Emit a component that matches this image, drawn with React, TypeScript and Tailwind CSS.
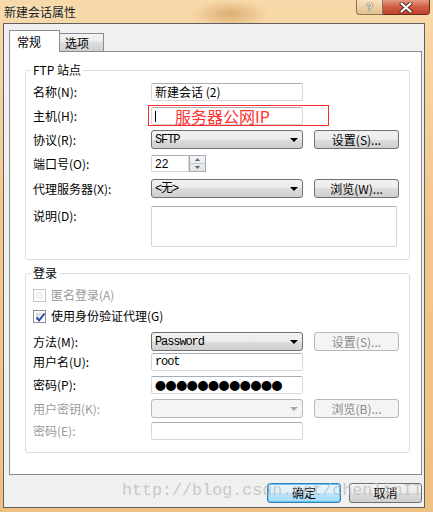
import React from "react";

const mono = "font-['Liberation_Mono','Noto_Sans_CJK_SC',monospace]";
const btnFace =
  "border-[#707070] bg-[linear-gradient(#f2f2f2,#ebebeb_50%,#dddddd_50%,#cfcfcf)] text-black";
const btnOff = "border-[#b5b9bc] bg-[#f4f4f4] text-[#8a8a8a]";

function Arrow({ off }: { off?: boolean }) {
  return (
    <svg width="8" height="4" viewBox="0 0 8 4" className="shrink-0">
      <path d="M0 0h8L4 4z" fill={off ? "#a9a9a9" : "#000"} />
    </svg>
  );
}

function Combo({ text, off }: { text?: string; off?: boolean }) {
  return (
    <div
      className={`w-[152px] h-[19px] rounded-[3px] border flex items-center pl-[3px] pr-[4px] ${
        off ? btnOff : btnFace
      }`}
    >
      <span className={`flex-1 leading-[14px] ${mono} text-[12px] tracking-[-1.1px]`}>{text}</span>
      <Arrow off={off} />
    </div>
  );
}

function Btn({ label, off }: { label: string; off?: boolean }) {
  return (
    <div
      className={`ml-[11px] w-[85px] h-[19px] rounded-[3px] border flex items-center justify-center leading-[14px] ${
        off ? btnOff : btnFace
      }`}
    >
      {label}
    </div>
  );
}

function Field({ cls, children }: { cls: string; children?: React.ReactNode }) {
  return (
    <div
      className={`bg-white rounded-[2px] border border-[#d4d7dc] border-t-[#abadb3] flex items-center pl-[3px] ${cls}`}
    >
      {children}
    </div>
  );
}

function Row({
  label,
  mt,
  off,
  top,
  children,
}: {
  label: string;
  mt: string;
  off?: boolean;
  top?: boolean;
  children: React.ReactNode;
}) {
  return (
    <div className={`relative flex ${top ? "items-start" : "items-center"} ${mt}`}>
      <span
        className={`w-[118px] shrink-0 leading-[14px] ${top ? "mt-[3px]" : ""} ${
          off ? "text-[#9b9b9b]" : "text-black"
        }`}
      >
        {label}
      </span>
      {children}
    </div>
  );
}

function Check({ checked, off }: { checked?: boolean; off?: boolean }) {
  return (
    <div
      className={`w-[13px] h-[13px] shrink-0 border bg-white p-[2px] ${
        off ? "border-[#c4c4c4]" : "border-[#8e8f8f]"
      }`}
    >
      <div
        className={`w-full h-full relative ${
          off ? "bg-[#f2f2f2]" : "bg-[linear-gradient(135deg,#d4d6d8,#f7f7f7)]"
        }`}
      >
        {checked && (
          <svg width="11" height="11" viewBox="0 0 11 11" className="absolute -left-[1px] -top-[1px]">
            <path d="M1.5 5.5l2.6 3L9.6 1.5" fill="none" stroke="#2b4ba3" strokeWidth="2" />
          </svg>
        )}
      </div>
    </div>
  );
}

function Group({ title, cls, children }: { title: string; cls: string; children: React.ReactNode }) {
  return (
    <div className={`relative w-[385px] border border-[#d5dfe5] rounded-[3px] pl-[7px] flex flex-col ${cls}`}>
      <span className="absolute left-[5px] -top-[8px] px-[2px] bg-white leading-[14px]">{title}</span>
      {children}
    </div>
  );
}

export default function App() {
  return (
    <div className="relative w-[433px] h-[512px] overflow-hidden flex flex-col text-[12px] font-['Noto_Sans_CJK_SC','Noto_Sans',sans-serif] bg-[radial-gradient(ellipse_38px_14px_at_230px_14px,#dcae73,transparent),linear-gradient(#f8d9a9,#f3c88e_40%,#eec083)]">
      {/* title bar */}
      <div className="h-[23px] shrink-0 flex items-start">
        <span className="ml-[4px] mt-[4px] leading-[15px] text-[#1b1b1b] [text-shadow:0_0_5px_#fff3dc]">
          新建会话属性
        </span>
        <div className="ml-auto mr-[3px] flex">
          <div className="w-[27px] h-[15px] border border-t-0 border-[#8b7558] rounded-bl-[4px] bg-[linear-gradient(#f7e2c3,#ecd0a6_50%,#e3c08f)] flex items-center justify-center">
            <span className="text-[11px] leading-[13px] font-bold text-[#f8efe0] font-['Liberation_Sans',sans-serif] [text-shadow:0_0_1px_#3a3a3a,0_0_1px_#3a3a3a]">
              ?
            </span>
          </div>
          <div className="w-[47px] h-[15px] border border-t-0 border-l-0 border-[#6d2a1c] rounded-br-[4px] bg-[linear-gradient(#e39a84,#d1624a_45%,#c0422a)] flex items-center justify-center">
            <svg width="14" height="11" viewBox="0 0 14 11">
              <path d="M2.5 1.5l9 8M11.5 1.5l-9 8" stroke="#5a2a22" strokeWidth="4" strokeLinecap="round" />
              <path d="M2.5 1.5l9 8M11.5 1.5l-9 8" stroke="#ffffff" strokeWidth="2.2" strokeLinecap="round" />
            </svg>
          </div>
        </div>
      </div>

      {/* client */}
      <div className="ml-[3px] w-[422px] h-[485px] border border-[#5f5f5f] bg-[#f0f0f0] flex flex-col">
        {/* tabs */}
        <div className="mt-[6px] ml-[5px] flex items-end">
          <div className="relative z-10 -mb-px w-[51px] h-[22px] border border-b-0 border-[#898c95] bg-white pl-[7px] pt-[4px] leading-[14px]">
            常规
          </div>
          <div className="w-[44px] h-[18px] border border-l-0 border-b-0 border-[#898c95] bg-[linear-gradient(#f3f3f3,#ebebeb_50%,#dddddd_50%,#cfcfcf)] pl-[5px] pt-[2px] leading-[14px]">
            选项
          </div>
        </div>

        {/* tab page */}
        <div className="ml-[5px] w-[413px] h-[424px] border border-[#898c95] bg-white pl-[15px] pt-[18px] flex flex-col">
          <Group title="FTP 站点" cls="h-[190px]">
            <Row label="名称(N):" mt="mt-[12px]">
              <Field cls="w-[152px] h-[18px]">
                <span className="leading-[14px]">新建会话 (2)</span>
              </Field>
            </Row>
            <Row label="主机(H):" mt="mt-[6px]">
              <Field cls="w-[152px] h-[18px] border-[#84b8e8] border-t-[#5d9ad0]">
                <span className="w-px h-[11px] bg-black" />
              </Field>
              <div className="absolute left-[115px] -top-[2px] w-[181px] h-[21px] border border-[#ff2a2a] pl-[26px] flex items-center">
                <span className="text-[16px] leading-[18px] text-[#ff3030]">服务器公网IP</span>
              </div>
            </Row>
            <Row label="协议(R):" mt="mt-[5px]">
              <Combo text="SFTP" />
              <Btn label="设置(S)..." />
            </Row>
            <Row label="端口号(O):" mt="mt-[6px]">
              <Field cls="w-[38px] h-[17px] rounded-r-none">
                <span className="leading-[14px] font-['Liberation_Sans',sans-serif]">22</span>
              </Field>
              <div className="w-[17px] h-[17px] border border-[#a5a9b0] flex flex-col bg-[linear-gradient(#f4f4f4,#e2e2e2)]">
                <div className="flex-1 flex items-center justify-center border-b border-[#c7cbd1]">
                  <svg width="5" height="3" viewBox="0 0 5 3">
                    <path d="M0 3h5L2.5 0z" fill="#4f6790" />
                  </svg>
                </div>
                <div className="flex-1 flex items-center justify-center">
                  <svg width="5" height="3" viewBox="0 0 5 3">
                    <path d="M0 0h5L2.5 3z" fill="#4f6790" />
                  </svg>
                </div>
              </div>
            </Row>
            <Row label="代理服务器(X):" mt="mt-[7px]">
              <Combo text="<无>" />
              <Btn label="浏览(W)..." />
            </Row>
            <Row label="说明(D):" mt="mt-[8px]" top>
              <Field cls="w-[246px] h-[41px]" />
            </Row>
          </Group>

          <Group title="登录" cls="mt-[13px] h-[180px]">
            <div className="mt-[14px] flex items-center">
              <Check off />
              <span className="ml-[5px] leading-[14px] text-[#9b9b9b]">匿名登录(A)</span>
            </div>
            <div className="mt-[7px] flex items-center">
              <Check checked />
              <span className="ml-[5px] leading-[14px]">使用身份验证代理(G)</span>
            </div>
            <Row label="方法(M):" mt="mt-[9px]">
              <Combo text="Password" />
              <Btn label="设置(S)..." off />
            </Row>
            <Row label="用户名(U):" mt="mt-[2px]">
              <Field cls="w-[152px] h-[18px]">
                <span className={`leading-[14px] ${mono} text-[12px] tracking-[-1.1px]`}>root</span>
              </Field>
            </Row>
            <Row label="密码(P):" mt="mt-[5px]">
              <Field cls="w-[152px] h-[18px]">
                <span className="leading-[14px] text-[11px] tracking-[-0.4px]">●●●●●●●●●●●●</span>
              </Field>
            </Row>
            <Row label="用户密钥(K):" mt="mt-[5px]" off>
              <Combo off />
              <Btn label="浏览(B)..." off />
            </Row>
            <Row label="密码(E):" mt="mt-[4px]" off>
              <Field cls="w-[152px] h-[18px]" />
            </Row>
          </Group>
        </div>

        {/* dialog buttons */}
        <div className="mt-[8px] mr-[2px] flex justify-end gap-[8px]">
          <div className="w-[74px] h-[20px] rounded-[3px] border border-[#3c7fb1] bg-[linear-gradient(#eaf6fd,#d9f0fc_50%,#bee6fd_50%,#a7d9f5)] shadow-[inset_0_0_0_1px_#58c4f7] flex items-center justify-center leading-[14px]">
            确定
          </div>
          <div className={`w-[73px] h-[20px] rounded-[3px] border flex items-center justify-center leading-[14px] ${btnFace}`}>
            取消
          </div>
        </div>
      </div>

      {/* watermark */}
      <span className="pointer-events-none absolute left-[122px] top-[481px] text-[16.7px] leading-[20px] text-[#b9b6b0]/70 font-['Liberation_Mono',monospace]">
        http://blog.csdn.net/chenlinIT
      </span>
    </div>
  );
}
